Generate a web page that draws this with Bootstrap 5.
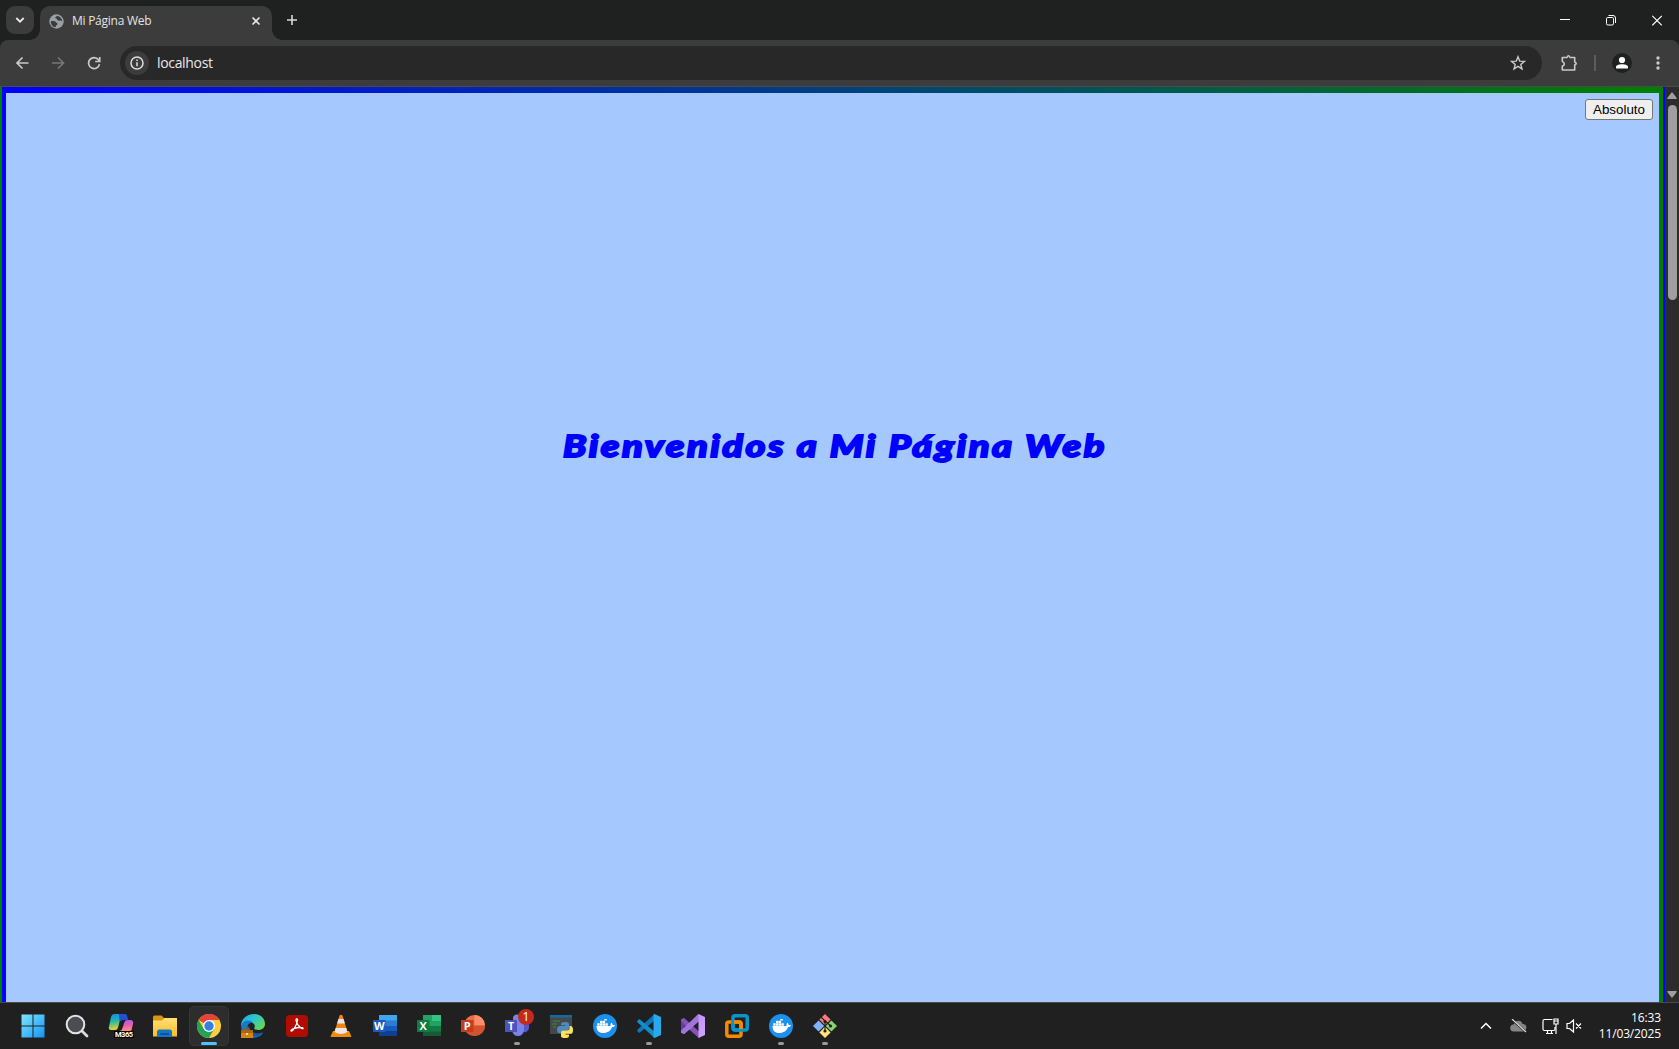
<!DOCTYPE html>
<html lang="es">
<head>
<meta charset="utf-8">
<title>Mi Página Web</title>
<link href="https://cdn.jsdelivr.net/npm/bootstrap@5.3.0/dist/css/bootstrap.min.css" rel="stylesheet">
<style>
html,body{height:100%;overflow:hidden}
body{font-family:"Open Sans","Noto Sans",sans-serif;background:#202120;color:#e3e3e3;font-size:12px}
svg{display:block;flex:none}
.tabstrip{height:40px;background:#1f2120;padding-left:6px}
.tab-search{width:28px;height:28px;border-radius:9px;background:#3c3c3c;margin-top:6px}
.page-tab{position:relative;width:232px;height:34px;margin:6px 0 0 6px;padding:0 10px 4px 9px;border-radius:10px 10px 0 0;background:#3c3c3c}
.page-tab::before,.page-tab::after{content:"";position:absolute;bottom:0;width:10px;height:10px}
.page-tab::before{left:-10px;background:radial-gradient(circle at 0 0,transparent 9.5px,#3c3c3c 10px)}
.page-tab::after{right:-10px;background:radial-gradient(circle at 100% 0,transparent 9.5px,#3c3c3c 10px)}
.tab-title{font-size:12px;letter-spacing:-.26px;margin-left:8px}
.plus-btn{margin:14px 0 0 14px}
.win-ctl{width:46px;height:40px}
.win-ctl:last-child{width:45px;padding-left:1px}
.toolbar-wrap{height:47px;background:#1f2120}
.toolbar{height:47px;background:#3c3c3c;border-radius:8px 8px 0 0;border-bottom:1px solid #4a4a4a;padding:0 13px 0 4px}
.tool{width:36px;height:36px}
.address{height:34px;border-radius:17px;background:#282828;margin-left:8px;padding:0 16px 0 5px}
.site-info{width:24px;height:24px;border-radius:50%;background:#3c3c3c}
.url{font-size:14px;line-height:20px;letter-spacing:-.33px;margin-left:8px;padding-bottom:1px;color:#e8e8e8}
.viewport{height:915px}
.frame-out{border-left:2px solid green;border-right:2px solid blue}
.frame-in{border:solid;border-width:6px 4px 0;border-image:linear-gradient(to right,blue,green) 6 4 0 4;background:#a5c8ff;background-clip:padding-box}
.hero-title{font:italic 900 31px/40px Lato,sans-serif;color:#00f;-webkit-text-stroke:1.8px #00f;white-space:nowrap;width:fit-content;margin:332px auto 0;padding-left:4px;letter-spacing:2.05px;transform:scaleX(1.228)}
.abs-btn{position:absolute;right:6px;top:6px;width:68px;height:21px;border:1px solid #767676;border-radius:3px;background:#efefef;color:#000;font:13.33px/18px "Liberation Sans",Arial,sans-serif;padding:0}
.scrollbar-col{width:14px;background:#2c2c2c;padding:5px 0 4px}
.thumb{width:9px;height:195px;margin-top:5px;border-radius:5px;background:#9f9f9f}
.taskbar{height:47px;background:#202020;border-top:1px solid #4b4b4b;padding-left:11px}
.slot{position:relative;width:44px;height:46px}
.slot>svg{margin-top:-1px}
.slot.active::before{content:"";position:absolute;inset:3px 2px;border:1px solid #363636;background:#2d2d2d;border-radius:5px}
.slot.active>svg{position:relative}
.slot.active::after,.slot.running::after{content:"";position:absolute;bottom:4px;left:19px;width:6px;height:3px;border-radius:2px;background:#9a9a9a}
.slot.active::after{left:14px;width:16px;background:#4cc2ff}
.clock{width:66px;font-size:12px;line-height:16px;letter-spacing:-.14px;color:#fff;margin:0 18px 0 12px;padding-bottom:1px}
</style>
<script src="https://cdn.jsdelivr.net/npm/bootstrap@5.3.0/dist/js/bootstrap.bundle.min.js"></script>
</head>
<body class="d-flex flex-column">
<svg width="0" height="0" class="position-absolute">
<defs>
<linearGradient id="win" x2="1" y2="1"><stop stop-color="#7fe6ff"/><stop offset="1" stop-color="#1593f5"/></linearGradient>
<linearGradient id="cpA" x2=".2" y2="1"><stop stop-color="#1688e8"/><stop offset=".5" stop-color="#27b9a8"/><stop offset="1" stop-color="#e8d22c"/></linearGradient>
<linearGradient id="cpB" x2=".1" y2="1"><stop stop-color="#a35cf2"/><stop offset=".55" stop-color="#e85fb5"/><stop offset="1" stop-color="#ff9270"/></linearGradient>
<linearGradient id="fold" x2="0" y2="1"><stop stop-color="#ffdf75"/><stop offset="1" stop-color="#f8bd2b"/></linearGradient>
<linearGradient id="edge" x2="1" y2=".6"><stop stop-color="#1ba2e5"/><stop offset=".5" stop-color="#2cc5d0"/><stop offset="1" stop-color="#62d75b"/></linearGradient>
<linearGradient id="vs" x2="1" y2="1"><stop stop-color="#b78af5"/><stop offset="1" stop-color="#d2a5ff"/></linearGradient>
<symbol id="docker" viewBox="0 0 24 24"><circle cx="12" cy="12" r="12" fill="#1b90ee"/><path d="M3.500 12h14c-.3-1.600.3-2.600.9-3.300 1 .7 1.400 1.500 1.300 2.400.8-.1 1.700 0 2.300.4-.5 1-1.500 1.500-2.800 1.500C17.700 16.700 14.700 19 10.300 19 5.700 19 3.500 16.500 3.500 12zM4.300 9.300h2.400v2.400H4.300zM7 9.300h2.400v2.400H7zM9.700 9.300h2.400v2.400H9.700zM12.400 9.300h2.400v2.400h-2.400zM7 6.800h2.400v2.200H7zM9.700 6.800h2.400v2.200H9.700z" fill="#fff"/><path d="M11.400 5h2.400v1.500h-2.400z" fill="#fff"/></symbol>
</defs>
</svg>

<header class="tabstrip d-flex flex-shrink-0">
  <div class="tab-search d-flex align-items-center justify-content-center"><svg width="10" height="8" fill="none" stroke="#e8e8e8" stroke-width="1.800"><path d="M1.300 2 5 5.700 8.700 2"/></svg></div>
  <div class="page-tab d-flex align-items-center">
    <svg width="15" height="15" viewBox="0 0 15 15"><circle cx="7.500" cy="7.500" r="7.200" fill="#9aa0a6"/><path d="M1.800 7.200C4 6.800 6.500 7 7 8.200c.4 1 1.700.6 1.600 1.800-.1.900-1.300.9-1.500 1.800-.1.700-.6 1.200-1.400 1.500C3.200 12.500 1.600 10 1.800 7.200zM8.300 1.800c-.5.900-2.100.9-2 2 .1 1 1.600.6 1.700 1.500.1 1.100 1.500 1.500 2.600 1.300 1-.2 1.200.7 2.500.6C13 4.700 11 2.300 8.300 1.800z" fill="#3c3c3c"/></svg>
    <span class="tab-title">Mi Página Web</span>
    <svg class="ms-auto" width="12" height="12" stroke="#e8e8e8" stroke-width="1.600"><path d="m2.500 2.500 7 7m0-7-7 7"/></svg>
  </div>
  <svg class="plus-btn" width="12" height="12" stroke="#d8d8d8" stroke-width="1.600"><path d="M6 1v10M1 6h10"/></svg>
  <div class="d-flex ms-auto">
    <div class="win-ctl d-flex align-items-center justify-content-center"><svg width="10" height="10"><path d="M0 4.500h10" stroke="#fff"/></svg></div>
    <div class="win-ctl d-flex align-items-center justify-content-center"><svg width="10" height="11" fill="none" stroke="#fff"><rect x=".5" y="2.500" width="7" height="7.500" rx="1.300"/><path d="M2.500.5H7Q9.500.5 9.500 3v5"/></svg></div>
    <div class="win-ctl d-flex align-items-center justify-content-center"><svg width="10" height="11" stroke="#fff" stroke-width="1.200"><path d="m.3.8 9.500 9.500m0-9.500-9.500 9.500"/></svg></div>
  </div>
</header>

<div class="toolbar-wrap flex-shrink-0">
 <nav class="toolbar d-flex align-items-center">
  <div class="tool d-flex align-items-center justify-content-center"><svg width="14" height="14" fill="none" stroke="#c9c9c9" stroke-width="1.700"><path d="M13.500 7H2M7.500 1.500 2 7l5.500 5.500"/></svg></div>
  <div class="tool d-flex align-items-center justify-content-center"><svg width="14" height="14" fill="none" stroke="#777" stroke-width="1.700"><path d="M1 7h11M7 1.500 12.500 7 7 12.500"/></svg></div>
  <div class="tool d-flex align-items-center justify-content-center"><svg width="14" height="14" fill="none" stroke="#c9c9c9" stroke-width="1.700"><path d="M12.500 8.200A5.500 5.500 0 1 1 11.500 3.800L12.500 5M12.700 1v4.500H8.200"/></svg></div>
  <div class="address d-flex align-items-center flex-grow-1">
    <div class="site-info d-flex align-items-center justify-content-center"><svg width="14" height="14" fill="none" stroke="#dedede" stroke-width="1.500"><circle cx="7" cy="7" r="6"/><path d="M7 6.300v4M7 3.500V5"/></svg></div>
    <span class="url">localhost</span>
    <svg class="ms-auto" width="16" height="16" fill="none" stroke="#c9c9c9" stroke-width="1.400"><path d="m8 1.800 1.700 4.300 4.700.3-3.600 3 1.200 4.500L8 11.400l-4 2.500 1.200-4.500-3.600-3 4.700-.3z"/></svg>
  </div>
  <svg style="margin-left:18px" width="18" height="18" fill="none" stroke="#c9c9c9" stroke-width="1.600"><path d="M2.300 3.500H7Q8.500 0 10 3.500h4.700V8q3 1.500 0 3v5H2.300v-3.700q4-2.300 0-5z" stroke-linejoin="round"/></svg>
  <svg style="margin-left:16px" width="2" height="16"><path d="M0 0h2v16H0z" fill="#5c5c5c"/></svg>
  <svg style="margin-left:16px" width="20" height="20"><circle cx="10" cy="10" r="10" fill="#1f2120"/><circle cx="10" cy="7" r="3.100" fill="#fff"/><path d="M4 15.500v-1.600c0-3.400 12-3.400 12 0v1.600z" fill="#fff"/></svg>
  <svg style="margin-left:24px;margin-right:6px" width="4" height="16" fill="#c9c9c9"><circle cx="2" cy="3" r="1.700"/><circle cx="2" cy="8" r="1.700"/><circle cx="2" cy="13" r="1.700"/></svg>
 </nav>
</div>

<div class="viewport d-flex flex-shrink-0">
  <main class="frame-out d-flex flex-grow-1">
    <section class="frame-in flex-grow-1 position-relative">
      <button class="abs-btn" type="button">Absoluto</button>
      <h1 class="hero-title">Bienvenidos a Mi Página Web</h1>
    </section>
  </main>
  <aside class="scrollbar-col d-flex flex-column align-items-center">
    <svg width="10" height="8" fill="#9f9f9f"><path d="M4.300.7q.7-.8 1.400 0L9.700 6q.3 1-.7 1H1Q0 7 .3 6z"/></svg>
    <div class="thumb"></div>
    <svg class="mt-auto" width="10" height="8" fill="#9f9f9f"><path d="M4.300 7.300q.7.800 1.400 0L9.700 2q.3-1-.7-1H1Q0 1 .3 2z"/></svg>
  </aside>
</div>

<footer class="taskbar d-flex flex-shrink-0">
  <div class="slot d-flex align-items-center justify-content-center"><svg width="24" height="24" fill="url(#win)"><path d="M.5.500h11v11H.5zM12.500.5h11v11h-11zM.5 12.500h11v11H.5zM12.500 12.500h11v11h-11z"/></svg></div>
  <div class="slot d-flex align-items-center justify-content-center"><svg width="24" height="24" fill="none"><path d="m17 17 5 5" stroke="#d8dce0" stroke-width="2.800" stroke-linecap="round"/><circle cx="10.500" cy="10.500" r="8.800" fill="#4b4d50" stroke="#e2e4e6" stroke-width="2"/></svg></div>
  <div class="slot d-flex align-items-center justify-content-center"><svg width="26" height="26"><path d="M6 1h10q2.500 0 2 3l-1 3h-3q-2 0-2.500 2L10 14.500Q9.300 17 7 17H3Q0 17 1 13.500L3 4Q3.800 1 6 1z" fill="url(#cpA)"/><path d="M11 1h6q2 0 2.500 3l.5 3h-6q-2 0-2.500 2z" fill="#234fd3"/><path d="M20 7h2q4 0 3 4l-1.500 6Q23 18 21 18H12q2-.5 2.500-3l2-6Q17 7 20 7z" fill="url(#cpB)"/><path d="M6 18h20v7H6z" fill="#050505"/><text x="16" y="24" text-anchor="middle" font-family="Roboto" font-weight="700" font-size="7.500" fill="#fff" textLength="18">M365</text></svg></div>
  <div class="slot d-flex align-items-center justify-content-center"><svg width="24" height="24"><path d="M0 3q0-1.500 1.500-1.500h7L11 4H24v8H0z" fill="#dc9413"/><path d="M0 6.500h9L11.500 4H24v18.500H0z" fill="url(#fold)"/><path d="M4 23v-5q0-2.500 2.500-2.500h10Q19 15.500 19 18v5z" fill="#1375c7"/><path d="M7 19h9v2H7z" fill="#0756a0"/></svg></div>
  <div class="slot active d-flex align-items-center justify-content-center"><svg width="24" height="24"><circle cx="12" cy="12" r="12" fill="#ffcd40"/><path d="M12 12 1.600 6A12 12 0 0 1 22.400 6H12z" fill="#e4443a"/><path d="M1.600 6A12 12 0 0 0 12 24l5.200-9L12 12 6.800 15z" fill="#25a355"/><circle cx="12" cy="12" r="6" fill="#fff"/><circle cx="12" cy="12" r="4.700" fill="#357ee8"/></svg></div>
  <div class="slot d-flex align-items-center justify-content-center"><svg width="24" height="24"><path d="M0 12C0-3 24-4 24 10c0 5-5 7-9.500 5.500-2-.6-1-1.600-.7-3C14.500 8 4 4.500 0 12z" fill="url(#edge)"/><path d="M0 12c2-6 9-7 12-3-5-1-7 4-4 8 3 5 9 5 14 2-4 7-21 8-22-7z" fill="#1679c9"/><path d="M9 10c-3 6 4 12 13 8-4 7-16 6-15-4z" fill="#1459a5"/><path d="M0 16h12v8H0z" fill="#d28617"/><path d="M3.500 16v-2H8v2" fill="none" stroke="#9d5b0e"/><path d="M0 16h12v3H0z" fill="#a9650f"/><path d="M5 19h2v2H5z" fill="#ffe38a"/></svg></div>
  <div class="slot d-flex align-items-center justify-content-center"><svg width="22" height="22"><rect width="22" height="22" rx="4" fill="#b30b00"/><path d="M5 16c-1-2 10-5 12-3 1 2-6-1-7-8 0-2 2-1.500 1.500.5C11 9 7 17 5 16z" fill="none" stroke="#fff" stroke-width="1.300"/></svg></div>
  <div class="slot d-flex align-items-center justify-content-center"><svg width="22" height="24"><path d="M3 17h16l2.300 5q.5 1-.8 1h-19Q.2 23 .7 22z" fill="#f48b0b"/><path d="M9.500 1.500q1.500-1.500 3 0L17.500 18q-6.500 4-13 0z" fill="#f28313"/><path d="m8.500 5-1.400 4.500h7.800L13.500 5zM5.700 14 4.500 18q6.500 4 13 0l-1.200-4z" fill="#e9e9e9"/></svg></div>
  <div class="slot d-flex align-items-center justify-content-center"><svg width="24" height="24"><path d="M6 1h18v6H6z" fill="#41a5ee"/><path d="M6 6.500h18V12H6z" fill="#2b7cd3"/><path d="M6 12h18v5.500H6z" fill="#185abd"/><path d="M6 17.500h18V22H6z" fill="#103f91"/><path d="M0 6h12.500v12H0z" fill="#185abd"/><text x="6.200" y="15.800" text-anchor="middle" font-family="Open Sans" font-weight="700" font-size="11" fill="#fff">W</text></svg></div>
  <div class="slot d-flex align-items-center justify-content-center"><svg width="24" height="24"><path d="M6 1h18v21H6z" fill="#21a366"/><path d="M15 1h9v6h-9z" fill="#33c481"/><path d="M6 12h18v10H6z" fill="#107c41"/><path d="M6 17.500h18V22H6z" fill="#185c37"/><path d="M0 6h12.500v12H0z" fill="#107c41"/><text x="6.200" y="15.800" text-anchor="middle" font-family="Open Sans" font-weight="700" font-size="11" fill="#fff">X</text></svg></div>
  <div class="slot d-flex align-items-center justify-content-center"><svg width="24" height="24"><circle cx="13.500" cy="11.500" r="10.500" fill="#ed6c47"/><path d="M13.500 1A10.500 10.500 0 0 1 24 11.500H13.500z" fill="#ff8f6b"/><path d="M3 11.500h21a10.500 10.500 0 0 1-21 0z" fill="#d35230"/><path d="M0 6h12.500v12H0z" fill="#c43e1c"/><text x="6.300" y="15.800" text-anchor="middle" font-family="Open Sans" font-weight="700" font-size="11" fill="#fff">P</text></svg></div>
  <div class="slot running d-flex align-items-center justify-content-center"><svg class="overflow-visible" width="24" height="24"><circle cx="12" cy="4.500" r="4" fill="#7b83eb"/><path d="M16 8h8v6q-1 5-6 4z" fill="#5059c9"/><path d="M7 8h12v8q-1 6-6 6t-6-6z" fill="#7b83eb"/><path d="M0 6h12v12H0z" fill="#4b53bc"/><text x="6" y="15.800" text-anchor="middle" font-family="Open Sans" font-weight="700" font-size="10.500" fill="#fff">T</text><circle cx="21" cy="3" r="8" fill="#c42b1c"/><text x="21" y="7.300" text-anchor="middle" font-family="Open Sans" font-size="12" fill="#fff">1</text></svg></div>
  <div class="slot d-flex align-items-center justify-content-center"><svg width="24" height="24"><path d="M1 1h22v19H1z" fill="#45484a"/><path d="M1 1h22v2.500H1z" fill="#176a9f"/><path d="M4 7h7M3 10h5M4 13h3" stroke="#3c743f" stroke-width="1.300"/><path d="M12 10q0-2 4-2t4 2v4q0 2.500-2 2.500h-4q-2 0-2 2.500h-2Q8 19 8 15.500T11 12h5.500v-.7H12z" fill="#4b8bbe"/><path d="M20.500 12H22q2 .5 2 4t-2 3.800h-5.500v.7H20V22q0 2-4 2t-4-2v-3.500q0-2 2-2h4.500q2 0 2-2z" fill="#ffe05a"/></svg></div>
  <div class="slot d-flex align-items-center justify-content-center"><svg width="24" height="24"><use href="#docker"/></svg></div>
  <div class="slot running d-flex align-items-center justify-content-center"><svg width="24" height="24"><path d="M17.500 0v6.500L3 18.500Q2 19 1.300 18.200L.3 17Q0 16.300.7 15.600z" fill="#0879bd"/><path d="M17.500 24v-6.500L3 5.500Q2 5 1.300 5.800L.3 7Q0 7.700.7 8.400z" fill="#128dcc"/><path d="m17.500 0 6.500 3v18l-6.500 3q-1 0-1-1V1q0-1 1-1z" fill="#27a9ec"/></svg></div>
  <div class="slot d-flex align-items-center justify-content-center"><svg width="24" height="24"><path d="m0 5.500 3-1.500L18 19.500V24L3.500 12v6.500L0 18z" fill="#6b3aa8"/><path d="M3 4 18 17.500V24L0 7V5.500z" fill="#8554ba"/><path d="M17.500 0 24 3v18l-6.500 3V7.500L3 20l-3-1.500V17z" fill="url(#vs)"/><path d="M17.500 0v7.500L3 20l-3-1.500V17z" fill="#a174db"/></svg></div>
  <div class="slot d-flex align-items-center justify-content-center"><svg width="24" height="24" fill="none" stroke-width="3.500"><rect x="8" y="1.800" width="14.200" height="14.200" rx="2" stroke="#0a95c8"/><rect x="1.800" y="8" width="14.200" height="14.200" rx="2" stroke="#f38b00"/><path d="M8 6v7q0 3 3 3h7" stroke="#0a95c8" stroke-width="3.500"/><path d="M9 8h5q2 0 2 2v5" stroke="#f38b00"/></svg></div>
  <div class="slot running d-flex align-items-center justify-content-center"><svg width="24" height="24"><use href="#docker"/></svg></div>
  <div class="slot running d-flex align-items-center justify-content-center"><svg width="24" height="24"><path d="m12 0 5.600 5.600L12 11.200 6.400 5.600z" fill="#ff7c78"/><path d="m5.600 6.400 5.600 5.600-5.600 5.600L0 12z" fill="#80b3ff"/><path d="m18.400 6.400L24 12l-5.600 5.600L12.800 12z" fill="#85d46d"/><path d="m12 12.800 5.600 5.600L12 24l-5.600-5.600z" fill="#ffe47b"/><path d="m8 3 4 4v11M12 7l6 5" fill="none" stroke="#222" stroke-width="1.200"/><circle cx="12" cy="7.500" r="1.600" fill="#222"/><circle cx="17.500" cy="12" r="1.600" fill="#222"/><circle cx="12" cy="17" r="1.600" fill="#222"/></svg></div>
  <div class="d-flex align-items-center ms-auto">
    <svg width="12" height="8" fill="none" stroke="#fff" stroke-width="1.500"><path d="m1 6.500 5-5 5 5"/></svg>
    <svg style="margin-left:18px" width="17" height="14"><path d="M4 12.500a3.500 3.500 0 0 1-.5-7C5 .5 11.500.5 12.500 5c4-.5 5.500 5 1.500 7.500z" fill="#858585"/><path d="m1 0 15 13" stroke="#202020" stroke-width="2"/><path d="m2 0 14 13" stroke="#ddd" stroke-width="1.200"/></svg>
    <svg style="margin-left:15px" width="17" height="17" fill="none" stroke="#fff" stroke-width="1.200"><path d="M10.500 1.500h-8Q1 1.500 1 3v8q0 1.500 1.500 1.500h9q1.500 0 1.500-1.500V9M4 15.500h7M5.500 13v2.500M9.500 13v2.500"/><path d="M12 1h4v5h-4zM14 6v10M12 3h4"/></svg>
    <svg style="margin-left:7px" width="17" height="14" fill="none" stroke="#fff" stroke-width="1.200"><path d="M1 4.500h2.500L7.500 1v12l-4-3.500H1zM10 4.500l5 5m0-5-5 5"/></svg>
    <div class="clock text-end"><div>16:33</div><div>11/03/2025</div></div>
  </div>
</footer>
</body>
</html>
